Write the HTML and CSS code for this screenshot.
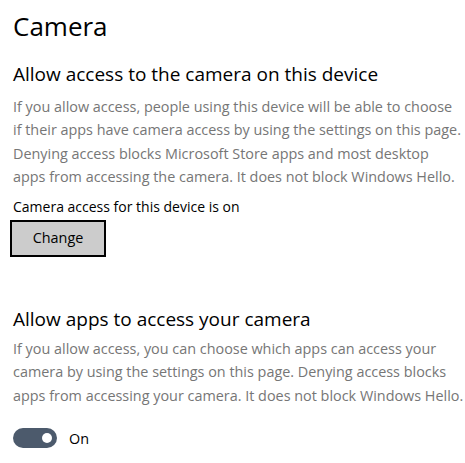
FILE: index.html
```html
<!DOCTYPE html>
<html>
<head>
<meta charset="utf-8">
<link rel="stylesheet" href="styles.css">
</head>
<body>
<main class="page">
  <h1 class="title">Camera</h1>
  <section class="section">
    <h2 class="heading">Allow access to the camera on this device</h2>
    <p class="desc">If you allow access, people using this device will be able to choose<br>if their apps have camera access by using the settings on this page.<br>Denying access blocks Microsoft Store apps and most desktop<br>apps from accessing the camera. It does not block Windows Hello.</p>
    <p class="status">Camera access for this device is on</p>
    <button class="btn">Change</button>
  </section>
  <section class="section second">
    <h2 class="heading">Allow apps to access your camera</h2>
    <p class="desc desc-tight">If you allow access, you can choose which apps can access your<br>camera by using the settings on this page. Denying access blocks<br>apps from accessing your camera. It does not block Windows Hello.</p>
    <div class="toggle-row">
      <span class="toggle"><span class="knob"></span></span>
      <span class="toggle-label">On</span>
    </div>
  </section>
</main>
</body>
</html>
```
FILE: styles.css
```css
html, body {
  margin: 0;
  padding: 0;
  background: #ffffff;
}
body {
  font-family: "Open Sans", "Noto Sans", sans-serif;
  color: #000000;
}
.page {
  padding: 8px 0 0 13px;
}
.title {
  margin: 0;
  font-size: 26px;
  font-weight: 400;
  line-height: 36px;
}
.section {
  margin-top: 17px;
}
.heading {
  margin: 0;
  font-size: 19px;
  font-weight: 400;
  line-height: 26px;
}
.desc {
  margin: 8px 0 0;
  font-size: 14.4px;
  line-height: 23.3px;
  color: #767676;
  white-space: nowrap;
}
.desc-tight {
  margin-top: 5px;
}
.status {
  margin: 9px 0 0;
  font-size: 14px;
  line-height: 20px;
}
.btn {
  display: block;
  margin: 3px 0 0 -3px;
  width: 96px;
  height: 37px;
  box-sizing: border-box;
  border: 2px solid #000000;
  background: #cccccc;
  font-family: inherit;
  font-size: 14.4px;
  color: #000000;
  padding: 0 0 2px;
}
.second {
  margin-top: 49px;
}
.toggle-row {
  display: flex;
  align-items: center;
  gap: 12px;
  margin-top: 21px;
}
.toggle {
  position: relative;
  display: block;
  width: 44px;
  height: 20px;
  border-radius: 10px;
  background: #4c5a6c;
}
.knob {
  position: absolute;
  right: 5px;
  top: 5px;
  width: 10px;
  height: 10px;
  border-radius: 50%;
  background: #ffffff;
}
.toggle-label {
  font-size: 14.4px;
}
```
